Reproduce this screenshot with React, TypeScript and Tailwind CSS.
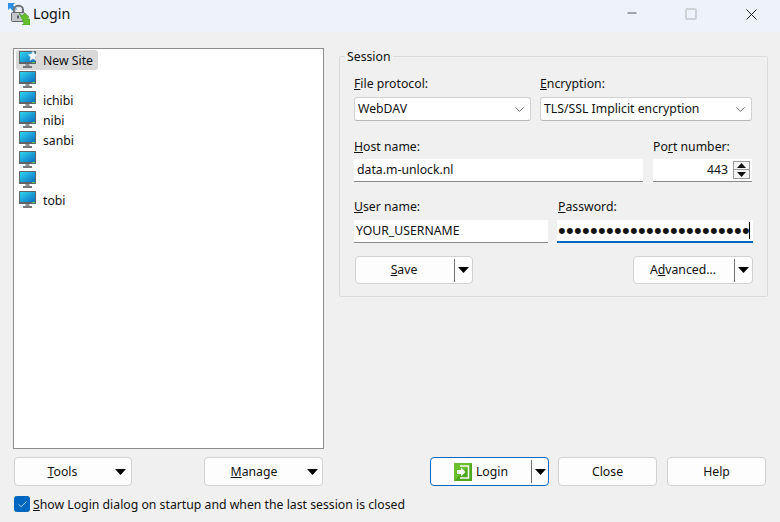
import { ReactNode } from "react";
import { Check, ChevronDown, Minus, X } from "lucide-react";

const sites = ["New Site", "", "ichibi", "nibi", "sanbi", "", "", "tobi"];

function Monitor({ star = false, id }: { star?: boolean; id: string }) {
  return (
    <svg width="20" height="18" viewBox="0 0 20 18" className="shrink-0">
      <defs>
        <linearGradient id={id} x1="0" y1="0" x2="1" y2="1">
          <stop offset="0" stopColor="#2fd6ee" />
          <stop offset="1" stopColor="#0a6fc4" />
        </linearGradient>
      </defs>
      <rect x="0" y="0" width="17" height="13" rx="0.5" fill="#5f6468" />
      <rect x="1" y="1" width="15" height="10" fill={`url(#${id})`} />
      <rect x="13" y="11" width="3" height="1" fill="#53d04a" />
      <rect x="6.5" y="13" width="4" height="2" fill="#8c9094" />
      <rect x="4" y="15" width="9" height="2" fill="#74787c" />
      {star && (
        <path
          d="M14 0 L15.6 3 L19 3.5 L16.5 6 L17.1 9.5 L14 7.8 L10.9 9.5 L11.5 6 L9 3.5 L12.4 3 Z"
          fill="#f6f7f8"
          stroke="#c9ccd0"
          strokeWidth="0.5"
        />
      )}
    </svg>
  );
}

function LockIcon() {
  return (
    <svg width="22" height="22" viewBox="0 0 22 22" className="shrink-0">
      <path d="M0 0 H7 L5 2 L9 6 L6 9 L2 5 L0 7 Z" fill="#2d8fe6" />
      <path d="M6 10 V6.5 C6 1.5 15 1.5 15 6.5 V10" fill="none" stroke="#6f7478" strokeWidth="2" />
      <path d="M7.5 10 V6.5 C7.5 3.5 13.5 3.5 13.5 6.5 V10" fill="none" stroke="#d5d8db" strokeWidth="0.8" />
      <rect x="3.5" y="9.5" width="13" height="9" rx="1" fill="#c4c8cc" stroke="#63676b" />
      <rect x="9" y="12.5" width="2" height="3" fill="#55595d" />
      <path d="M11 10 L14 13 L17 10 L21 14 L19 16 H22 V22 H14 L16 20 Z" fill="#63c02c" stroke="#3d8f17" strokeWidth="0.5" />
    </svg>
  );
}

function LoginIcon() {
  return (
    <svg width="18" height="18" viewBox="0 0 18 18" className="shrink-0">
      <rect width="18" height="18" fill="#6abf2e" />
      <path d="M0 18 L18 0 V18 Z" fill="#4fa61f" />
      <path d="M6 3 H14.5 V15 H6" fill="none" stroke="#f4f9ef" strokeWidth="1.6" />
      <path d="M3 7 H7 V4.5 L11.5 9 L7 13.5 V11 H3 Z" fill="#f4f9ef" />
    </svg>
  );
}

function Caret() {
  return (
    <svg width="11" height="6" viewBox="0 0 11 6" className="shrink-0">
      <path d="M0 0 H11 L5.5 6 Z" fill="#000" />
    </svg>
  );
}

function SplitButton({ width, split, children }: { width: string; split: string; children: ReactNode }) {
  return (
    <div className={`${width} h-[28px] flex items-center bg-[#fdfdfd] border border-[#d2d2d2] rounded-[4px]`}>
      <div className={`${split} flex items-center justify-center pr-[2px]`}>{children}</div>
      <div className="w-px h-[23px] bg-[#6e6e6e]" />
      <div className="flex-1 flex justify-center"><Caret /></div>
    </div>
  );
}

function MenuButton({ width, children, pad }: { width: string; children: ReactNode; pad: string }) {
  return (
    <div className={`${width} h-[29px] flex items-center bg-[#fdfdfd] border border-[#d2d2d2] rounded-[4px]`}>
      <div className={`${pad} text-center pt-[1px]`}>{children}</div>
      <div className="flex-1 flex justify-center"><Caret /></div>
    </div>
  );
}

function Field({ label, children, width, gap = "mb-[5px]" }: { label: ReactNode; children: ReactNode; width: string; gap?: string }) {
  return (
    <div className={width}>
      <div className={`h-[16px] leading-[16px] ${gap}`}>{label}</div>
      {children}
    </div>
  );
}

const inputBox = "h-[23px] bg-white border-b border-[#8a8a8a] flex items-center";

export default function App() {
  return (
    <div className="w-[780px] h-[522px] overflow-hidden bg-[#f0f0f0] text-[12.25px] text-[#111] flex flex-col font-['Noto_Sans',sans-serif]">
      {/* title bar */}
      <div className="h-8 bg-[#eef3fb] flex items-center pl-[8px] pb-[4px]">
        <LockIcon />
        <span className="ml-[3px] text-[14.25px]">Login</span>
        <div className="ml-auto flex items-center">
          <Minus size={14} strokeWidth={1.2} className="mr-[46px] mt-[-3px]" />
          <div className="w-[12px] h-[12px] border-2 border-[#cfd2d6] rounded-[2px] mr-[45px]" />
          <X size={19} strokeWidth={1.2} className="mr-[19px]" />
        </div>
      </div>

      <div className="flex pl-[13px] pt-[16px]">
        {/* site tree */}
        <div className="w-[311px] h-[401px] bg-white border border-[#8c8c8c] pl-[2px] pt-[1px]">
          {sites.map((name, i) => (
            <div key={i} className={`h-[20px] w-[82px] flex items-center pl-[3px] rounded-[3px] ${i === 0 ? "bg-[#d9d9d9]" : ""}`}>
              <Monitor star={i === 0} id={`screen-${i}`} />
              <span className="ml-[4px] whitespace-nowrap pt-[2px]">{name}</span>
            </div>
          ))}
        </div>

        {/* session group */}
        <fieldset className="ml-[15px] w-[427px] h-[249px] border border-[#dcdcdc] px-[14px] rounded-[2px]">
          <legend className="ml-[-9px] px-[2px] pt-[1px] leading-[16px]">Session</legend>

          <div className="flex gap-[9px] mt-[11px]">
            <Field width="w-[177px]" label={<><u>F</u>ile protocol:</>}>
              <div className="h-[24px] bg-white border border-[#d2d2d2] border-b-[#b8b8b8] rounded-[3px] flex items-center justify-between pl-[3px] pr-[3px]">
                WebDAV
                <ChevronDown size={15} strokeWidth={1} />
              </div>
            </Field>
            <Field width="w-[212px]" label={<><u>E</u>ncryption:</>}>
              <div className="h-[24px] bg-white border border-[#d2d2d2] border-b-[#b8b8b8] rounded-[3px] flex items-center justify-between pl-[3px] pr-[3px]">
                TLS/SSL Implicit encryption
                <ChevronDown size={15} strokeWidth={1} />
              </div>
            </Field>
          </div>

          <div className="flex gap-[10px] mt-[18px]">
            <Field width="w-[289px]" gap="mb-[4px]" label={<><u>H</u>ost name:</>}>
              <div className={`${inputBox} pl-[3px]`}>data.m-unlock.nl</div>
            </Field>
            <Field width="w-[99px]" gap="mb-[4px]" label={<>Po<u>r</u>t number:</>}>
              <div className={`${inputBox} justify-end pr-[2px]`}>
                443
                <div className="ml-[5px] w-[17px] flex flex-col">
                  <div className="h-[9px] border border-[#9a9a9a] flex items-center justify-center bg-[#f4f4f4]">
                    <svg width="9" height="5" viewBox="0 0 9 5"><path d="M4.5 0 L9 5 H0 Z" fill="#111" /></svg>
                  </div>
                  <div className="h-[9px] border border-t-0 border-[#9a9a9a] flex items-center justify-center bg-[#f4f4f4]">
                    <svg width="9" height="5" viewBox="0 0 9 5"><path d="M0 0 H9 L4.5 5 Z" fill="#111" /></svg>
                  </div>
                </div>
              </div>
            </Field>
          </div>

          <div className="flex gap-[9px] mt-[17px]">
            <Field width="w-[194px]" label={<><u>U</u>ser name:</>}>
              <div className={`${inputBox} pl-[2px]`}>YOUR_USERNAME</div>
            </Field>
            <Field width="w-[196px]" label={<span className="pl-[1px]"><u>P</u>assword:</span>}>
              <div className="h-[23px] bg-white border-b-2 border-[#0067c0] flex items-center pl-[1px]">
                <span className="tracking-[0.3px] text-[22px] leading-none font-['Liberation_Sans',sans-serif]">{"•".repeat(24)}</span>
                <span className="w-px h-[17px] bg-black ml-[-1px]" />
              </div>
            </Field>
          </div>

          <div className="flex justify-between mt-[13px] pl-[1px]">
            <SplitButton width="w-[118px]" split="w-[98px]"><span><u>S</u>ave</span></SplitButton>
            <SplitButton width="w-[120px]" split="w-[100px]"><span>A<u>d</u>vanced...</span></SplitButton>
          </div>
        </fieldset>
      </div>

      {/* bottom buttons */}
      <div className="flex pl-[14px] mt-[8px]">
        <MenuButton width="w-[118px]" pad="w-[95px]"><u>T</u>ools</MenuButton>
        <div className="ml-[72px]">
          <MenuButton width="w-[119px]" pad="w-[98px]"><u>M</u>anage</MenuButton>
        </div>
        <div className="ml-[107px] h-[29px]">
          <div className="w-[119px] h-[29px] flex items-center bg-[#fdfdfd] border border-[#0067c0] rounded-[4px]">
            <div className="w-[100px] flex items-center justify-center gap-[4px]">
              <LoginIcon />
              <span className="pt-[1px]">Login</span>
            </div>
            <div className="w-px h-[23px] bg-[#6e6e6e]" />
            <div className="flex-1 flex justify-center"><Caret /></div>
          </div>
        </div>
        <div className="ml-[9px] w-[99px] h-[29px] pt-[1px] flex items-center justify-center bg-[#fdfdfd] border border-[#d2d2d2] rounded-[4px]">Close</div>
        <div className="ml-[10px] w-[99px] h-[29px] pt-[1px] flex items-center justify-center bg-[#fdfdfd] border border-[#d2d2d2] rounded-[4px]">Help</div>
      </div>

      {/* startup checkbox */}
      <div className="flex items-center pl-[14px] mt-[10px] h-[16px]">
        <div className="w-[16px] h-[16px] rounded-[3px] bg-[#0067c0] flex items-center justify-center">
          <Check size={11} strokeWidth={1.5} className="text-white" />
        </div>
        <span className="ml-[3px] whitespace-nowrap pt-[2px]"><u>S</u>how Login dialog on startup and when the last session is closed</span>
      </div>
    </div>
  );
}
